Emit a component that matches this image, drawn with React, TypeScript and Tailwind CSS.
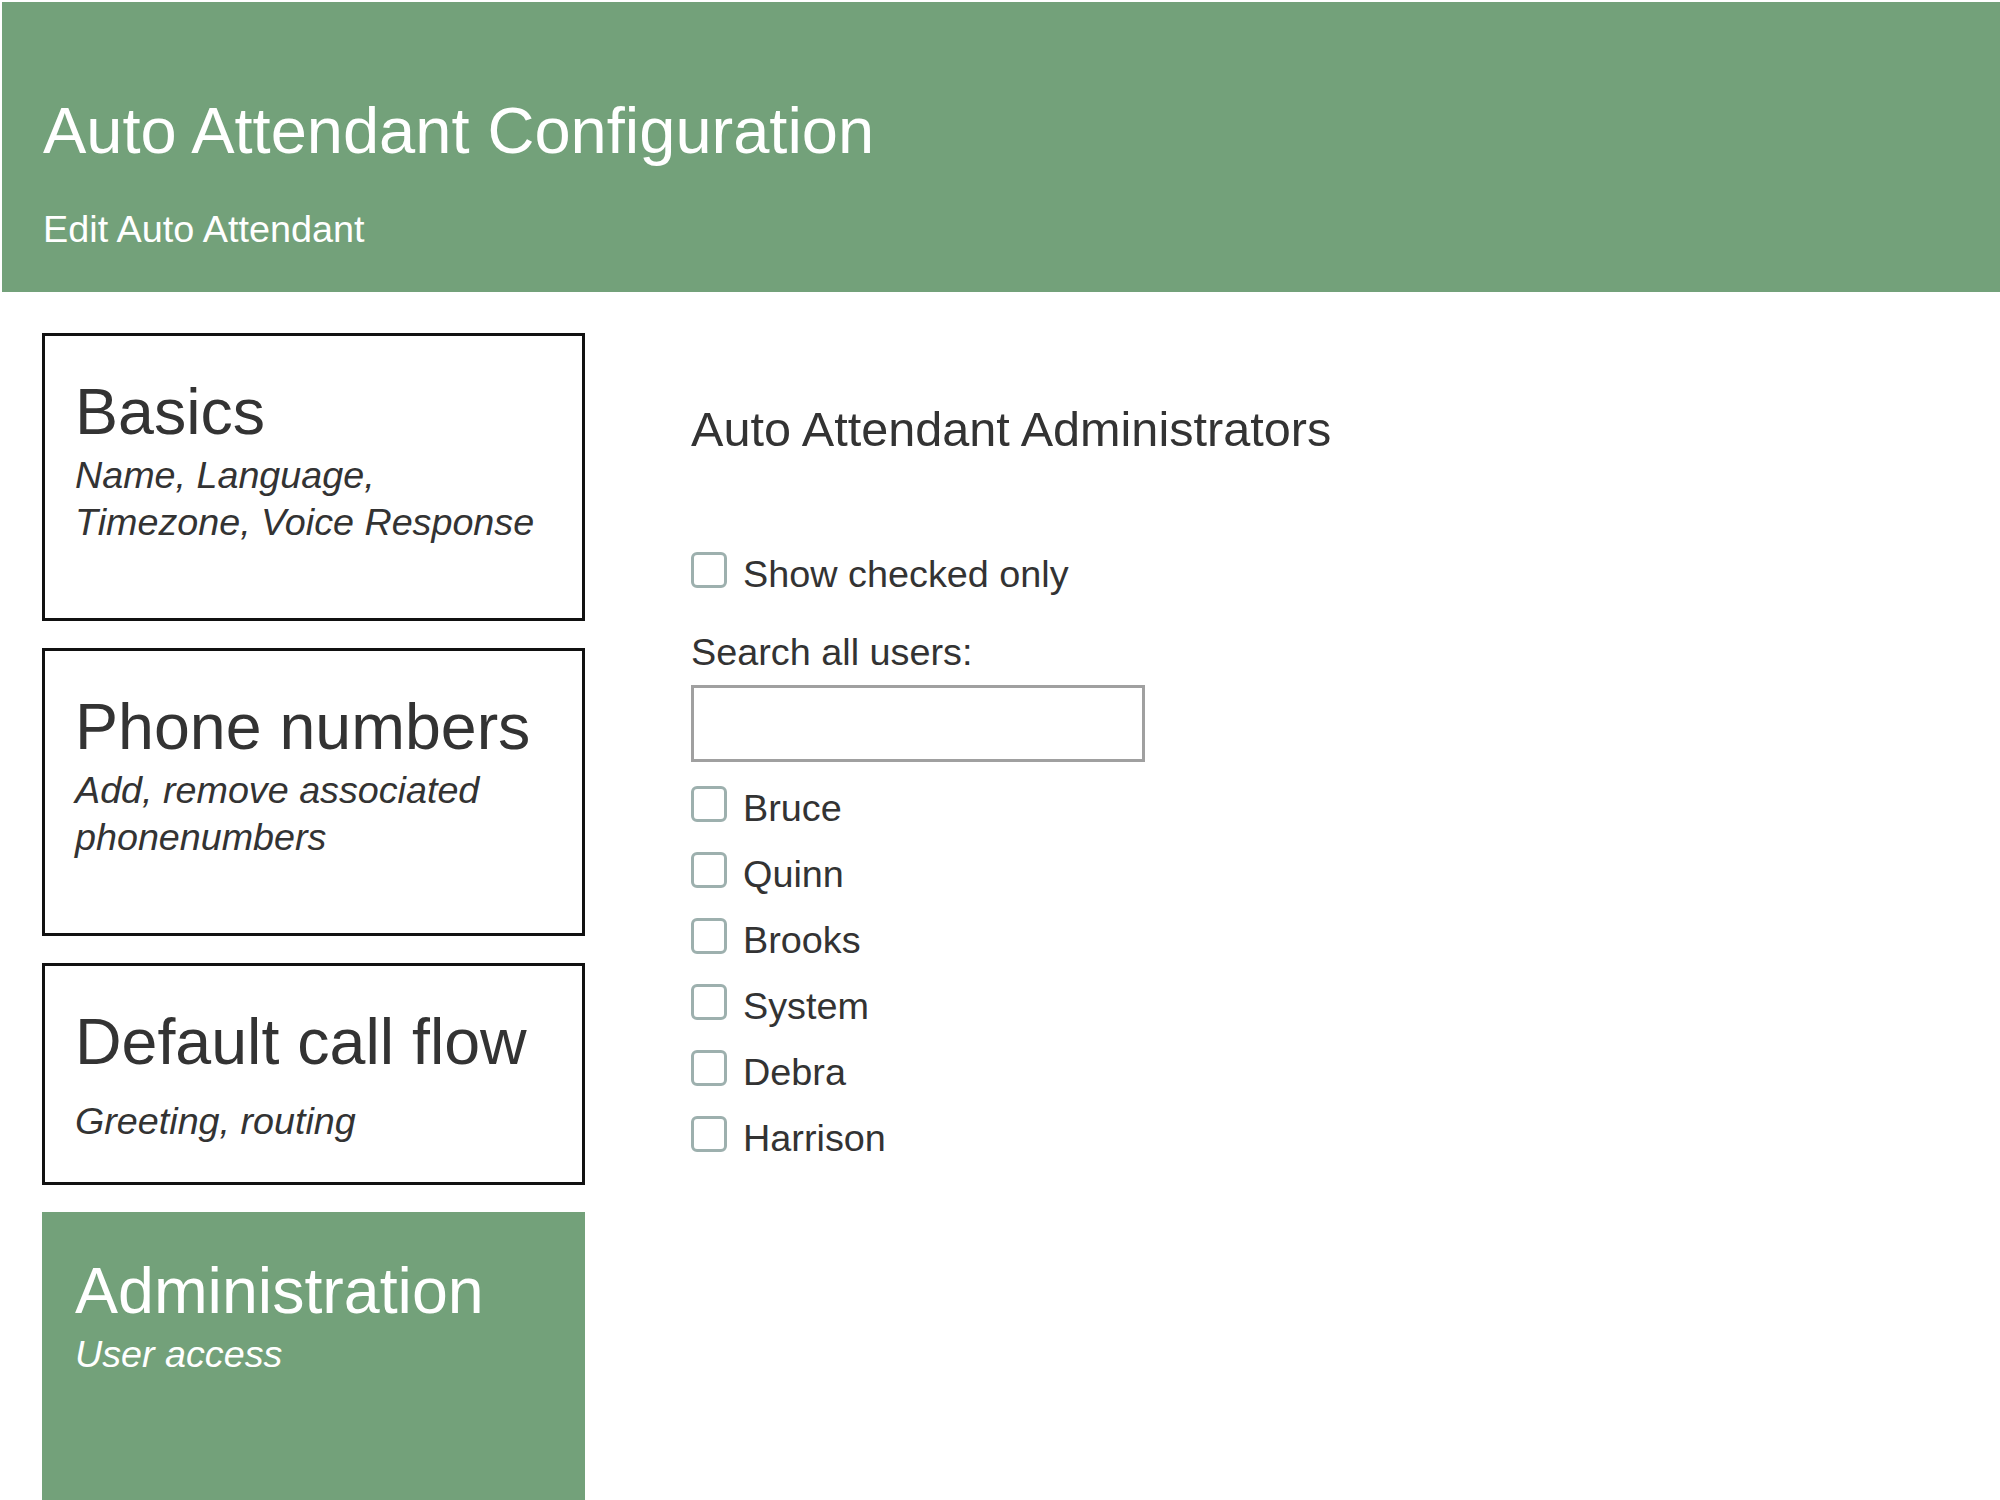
import { useState } from 'react';

const sections = [
  {
    title: 'Basics',
    subtitle: ['Name, Language,', 'Timezone, Voice Response'],
    height: 'h-[288px]',
    gap: 'mt-[8px]',
  },
  {
    title: 'Phone numbers',
    subtitle: ['Add, remove associated', 'phonenumbers'],
    height: 'h-[288px]',
    gap: 'mt-[8px]',
  },
  {
    title: 'Default call flow',
    subtitle: ['Greeting, routing'],
    height: 'h-[222px]',
    gap: 'mt-[24px]',
  },
];

const users = ['Bruce', 'Quinn', 'Brooks', 'System', 'Debra', 'Harrison'];

function CheckRow({
  label,
  checked,
  onChange,
}: {
  label: string;
  checked: boolean;
  onChange: () => void;
}) {
  return (
    <label className="flex items-start gap-[16px] cursor-pointer">
      <input
        type="checkbox"
        checked={checked}
        onChange={onChange}
        className="appearance-none w-[36px] h-[36px] shrink-0 bg-white border-[3px] border-[#9db0ae] rounded-[6px] checked:bg-[#73a17a] checked:border-[#73a17a] cursor-pointer"
      />
      <span className="pt-[4px] text-[37.8px] leading-[36px] text-[#333]">{label}</span>
    </label>
  );
}

export default function App() {
  const [showChecked, setShowChecked] = useState(false);
  const [search, setSearch] = useState('');
  const [selected, setSelected] = useState<Record<string, boolean>>({});

  const toggle = (name: string) => {
    setSelected(prev => ({ ...prev, [name]: !prev[name] }));
  };

  const visible = users.filter(u => {
    if (showChecked && !selected[u]) return false;
    return u.toLowerCase().includes(search.toLowerCase());
  });

  return (
    <div className="min-h-screen bg-white pt-[2px] pl-[2px] overflow-hidden font-['Liberation_Sans',Arial,sans-serif]">
      <header className="h-[290px] bg-[#73a17a] pl-[41px] pt-[97px] text-white">
        <h1 className="text-[65px] leading-[64px] font-normal">Auto Attendant Configuration</h1>
        <p className="mt-[48px] text-[37.8px] leading-[37.5px]">Edit Auto Attendant</p>
      </header>

      <div className="flex pt-[41px] pl-[40px]">
        <nav className="w-[543px] shrink-0 flex flex-col gap-[27px]">
          {sections.map(s => (
            <div
              key={s.title}
              className={`${s.height} border-[3px] border-[#111] px-[30px] pt-[44px] text-[#333] cursor-pointer`}
            >
              <h2 className="text-[64.5px] leading-[64px] font-normal">{s.title}</h2>
              <p className={`${s.gap} text-[37.7px] leading-[46.5px] italic`}>
                {s.subtitle.map(line => (
                  <span key={line} className="block">
                    {line}
                  </span>
                ))}
              </p>
            </div>
          ))}
          <div className="h-[320px] border-[3px] border-[#73a17a] bg-[#73a17a] px-[30px] pt-[44px] text-white">
            <h2 className="text-[64.5px] leading-[64px] font-normal">Administration</h2>
            <p className="mt-[8px] text-[37.7px] leading-[46.5px] italic">User access</p>
          </div>
        </nav>

        <main className="ml-[106px] pt-[72px]">
          <h2 className="text-[48.6px] leading-[48px] font-normal text-[#333]">Auto Attendant Administrators</h2>

          <div className="mt-[99px]">
            <CheckRow label="Show checked only" checked={showChecked} onChange={() => setShowChecked(v => !v)} />
          </div>

          <div className="mt-[42px] text-[37.8px] leading-[37.5px] text-[#333]">Search all users:</div>
          <input
            type="text"
            value={search}
            onChange={e => setSearch(e.target.value)}
            className="mt-[13px] block w-[454px] h-[77px] border-[3px] border-[#a0a0a0] bg-white px-3 text-[30px] text-[#333] outline-none"
          />

          <div className="mt-[24px] flex flex-col gap-[26px]">
            {visible.map(u => (
              <CheckRow key={u} label={u} checked={!!selected[u]} onChange={() => toggle(u)} />
            ))}
          </div>
        </main>
      </div>
    </div>
  );
}
